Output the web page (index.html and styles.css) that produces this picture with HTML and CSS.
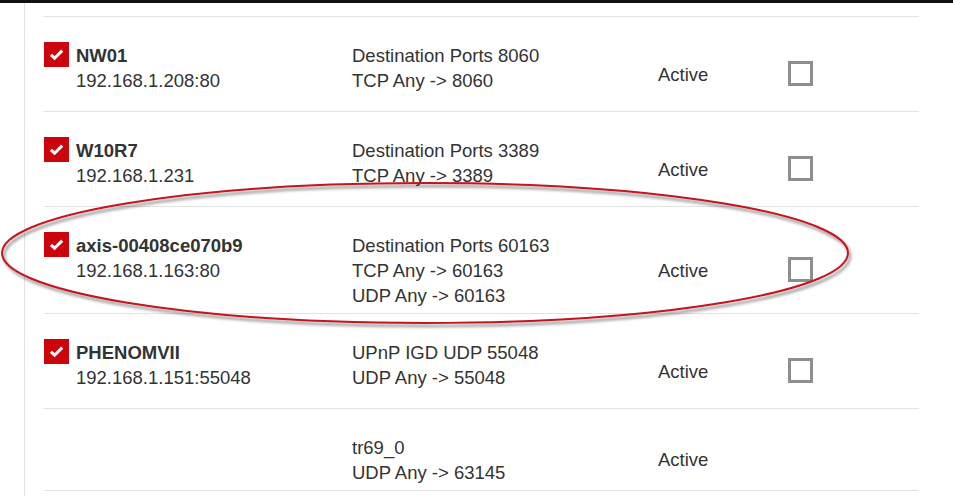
FILE: index.html
```html
<!DOCTYPE html>
<html>
<head>
<meta charset="utf-8">
<link rel="stylesheet" href="styles.css">
</head>
<body>
<div class="topbar"></div>
<div class="page">
  <div class="list">
    <div class="row">
      <div class="device">
        <span class="check"><svg viewBox="0 0 25 25" width="25" height="25"><polyline points="7,12.8 10.6,16.2 18.2,8.6" fill="none" stroke="#fff" stroke-width="3"/></svg></span>
        <div class="dev-text"><div class="name">NW01</div><div>192.168.1.208:80</div></div>
      </div>
      <div class="rule"><div>Destination Ports 8060</div><div>TCP Any -&gt; 8060</div></div>
      <div class="status">Active</div>
      <div class="box"></div>
    </div>
    <div class="row">
      <div class="device">
        <span class="check"><svg viewBox="0 0 25 25" width="25" height="25"><polyline points="7,12.8 10.6,16.2 18.2,8.6" fill="none" stroke="#fff" stroke-width="3"/></svg></span>
        <div class="dev-text"><div class="name">W10R7</div><div>192.168.1.231</div></div>
      </div>
      <div class="rule"><div>Destination Ports 3389</div><div>TCP Any -&gt; 3389</div></div>
      <div class="status">Active</div>
      <div class="box"></div>
    </div>
    <div class="row">
      <div class="device">
        <span class="check"><svg viewBox="0 0 25 25" width="25" height="25"><polyline points="7,12.8 10.6,16.2 18.2,8.6" fill="none" stroke="#fff" stroke-width="3"/></svg></span>
        <div class="dev-text"><div class="name">axis-00408ce070b9</div><div>192.168.1.163:80</div></div>
      </div>
      <div class="rule"><div>Destination Ports 60163</div><div>TCP Any -&gt; 60163</div><div>UDP Any -&gt; 60163</div></div>
      <div class="status">Active</div>
      <div class="box"></div>
    </div>
    <div class="row">
      <div class="device">
        <span class="check"><svg viewBox="0 0 25 25" width="25" height="25"><polyline points="7,12.8 10.6,16.2 18.2,8.6" fill="none" stroke="#fff" stroke-width="3"/></svg></span>
        <div class="dev-text"><div class="name">PHENOMVII</div><div>192.168.1.151:55048</div></div>
      </div>
      <div class="rule"><div>UPnP IGD UDP 55048</div><div>UDP Any -&gt; 55048</div></div>
      <div class="status">Active</div>
      <div class="box"></div>
    </div>
    <div class="row last">
      <div class="device"></div>
      <div class="rule"><div>tr69_0</div><div>UDP Any -&gt; 63145</div></div>
      <div class="status">Active</div>
    </div>
  </div>
</div>
<svg class="annot" width="953" height="496" viewBox="0 0 953 496">
  <defs>
    <filter id="sh" x="-5%" y="-20%" width="110%" height="140%">
      <feDropShadow dx="2" dy="3" stdDeviation="1.8" flood-color="#000" flood-opacity="0.5"/>
    </filter>
  </defs>
  <ellipse cx="425" cy="253" rx="423" ry="70" fill="none" stroke="#c3141b" stroke-width="2" filter="url(#sh)"/>
</svg>
</body>
</html>
```
FILE: styles.css
```css
html, body {
  margin: 0;
  padding: 0;
  background: #fff;
}
body {
  font-family: "Liberation Sans", Arial, sans-serif;
  font-size: 18.5px;
  line-height: 25px;
  color: #333;
  width: 953px;
  height: 496px;
  overflow: hidden;
  position: relative;
}
.topbar {
  height: 3px;
  background: #111;
}
.page {
  margin-left: 24px;
  border-left: 1px solid #e2e2e2;
  padding: 13px 0 0 19px;
  height: 480px;
}
.list {
  width: 875px;
}
.row {
  display: grid;
  grid-template-columns: 308px 306px 130px 1fr;
  border-top: 1px solid #e2e2e2;
  padding: 25px 0 6px 0;
}
.row.last {
  border-bottom: 1px solid #e2e2e2;
}
.device {
  display: flex;
  gap: 7px;
  align-self: start;
}
.dev-text {
  padding-top: 1px;
}
.check {
  width: 25px;
  height: 25px;
  background: #cd040b;
  display: block;
  flex: none;
}
.check svg {
  display: block;
}
.name {
  font-weight: bold;
}
.rule {
  align-self: start;
  padding-top: 1px;
  margin-bottom: -1px;
}
.status {
  align-self: center;
  padding-top: 1px;
}
.box {
  align-self: center;
  width: 25px;
  height: 25px;
  box-sizing: border-box;
  border: 3px solid #8e8e8e;
  margin: 19px 0;
}
.annot {
  position: absolute;
  left: 0;
  top: 0;
  pointer-events: none;
}
```
